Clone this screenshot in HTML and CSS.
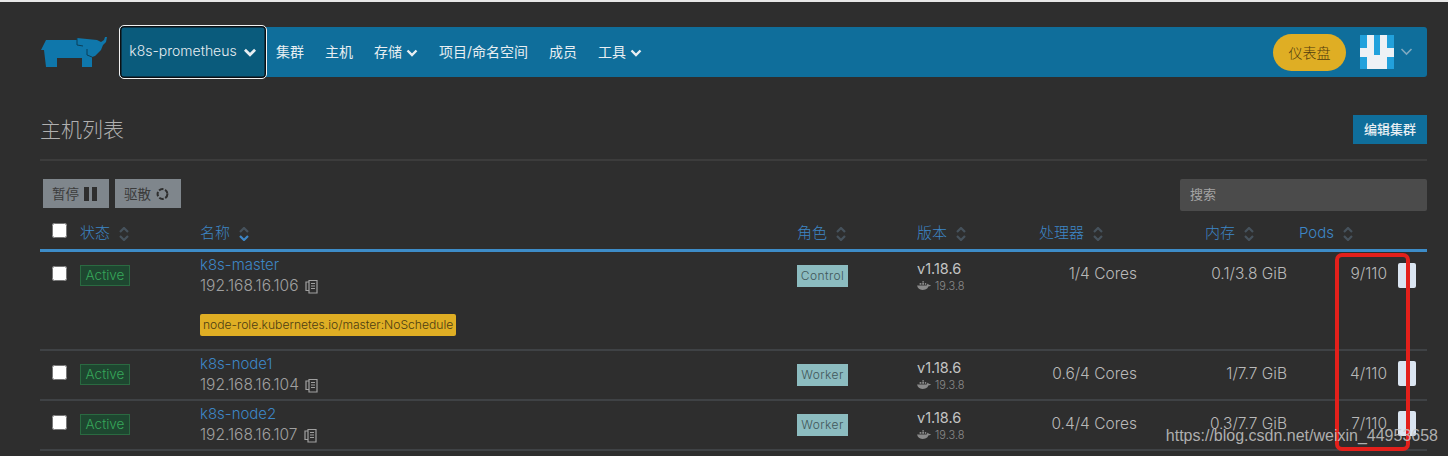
FILE: index.html
```html
<!DOCTYPE html>
<html lang="zh">
<head>
<meta charset="utf-8">
<title>主机列表</title>
<link rel="stylesheet" href="styles.css">
</head>
<body>
<div class="page">
  <header class="nav">
    <div class="brand">
      <svg class="logo" viewBox="0 0 67 31" aria-hidden="true"><path d="M0 13L5 3H36V1L56 3L60 5L63 3L64 0H66L65 5L62 8L60 13L54 19L51 20V30H41V21H16V30H5L3 13Z" fill="#0f77ab"/><path d="M36 1V8L42 9M46 12V18L51 20" stroke="#0b3f58" stroke-width="1" fill="none"/></svg>
    </div>
    <div class="bar">
      <button class="cluster">k8s-prometheus <svg class="chev big" viewBox="0 0 12 8"><path d="M1.5 1.5L6 6L10.5 1.5"/></svg></button>
      <nav class="menu">
        <a>集群</a>
        <a>主机</a>
        <a>存储 <svg class="chev" viewBox="0 0 12 8"><path d="M1.5 1.5L6 6L10.5 1.5"/></svg></a>
        <a>项目/命名空间</a>
        <a>成员</a>
        <a>工具 <svg class="chev" viewBox="0 0 12 8"><path d="M1.5 1.5L6 6L10.5 1.5"/></svg></a>
      </nav>
      <a class="dash">仪表盘</a>
      <svg class="avatar" viewBox="0 0 34 34" aria-hidden="true"><rect width="34" height="34" fill="#eef1f5"/><path d="M0 0H7V13H0ZM27 0H34V13H27ZM14 0H20V20H14ZM0 22H7V34H0ZM27 22H34V34H27Z" fill="#22a1dc"/></svg>
      <svg class="chev muted" viewBox="0 0 12 8"><path d="M1 1L6 6L11 1"/></svg>
    </div>
  </header>

  <div class="title-row">
    <h1>主机列表</h1>
    <button class="edit">编辑集群</button>
  </div>

  <div class="tools">
    <button class="act">暂停 <svg class="ic" viewBox="0 0 13 14"><path d="M0 0H5V14H0ZM8 0H13V14H8Z"/></svg></button>
    <button class="act">驱散 <svg class="ic" viewBox="0 0 14 14"><circle cx="7" cy="7" r="5.3" fill="none" stroke="#2e2e2e" stroke-width="2.2" stroke-dasharray="5 1.8"/></svg></button>
    <input class="search" placeholder="搜索">
  </div>

  <div class="grid head">
    <div class="c-check"><input type="checkbox" class="box"></div>
    <div><a class="th">状态 <svg class="sort" viewBox="0 0 10 14"><path d="M1 5L5 1L9 5M1 9L5 13L9 9"/></svg></a></div>
    <div><a class="th">名称 <svg class="sort down" viewBox="0 0 10 14"><path d="M1 5L5 1L9 5"/><path class="on" d="M1 9L5 13L9 9"/></svg></a></div>
    <div><a class="th">角色 <svg class="sort" viewBox="0 0 10 14"><path d="M1 5L5 1L9 5M1 9L5 13L9 9"/></svg></a></div>
    <div><a class="th">版本 <svg class="sort" viewBox="0 0 10 14"><path d="M1 5L5 1L9 5M1 9L5 13L9 9"/></svg></a></div>
    <div class="h-cpu"><a class="th">处理器 <svg class="sort" viewBox="0 0 10 14"><path d="M1 5L5 1L9 5M1 9L5 13L9 9"/></svg></a></div>
    <div class="h-mem"><a class="th">内存 <svg class="sort" viewBox="0 0 10 14"><path d="M1 5L5 1L9 5M1 9L5 13L9 9"/></svg></a></div>
    <div class="h-pods"><a class="th">Pods <svg class="sort" viewBox="0 0 10 14"><path d="M1 5L5 1L9 5M1 9L5 13L9 9"/></svg></a></div>
  </div>

  <div class="grid row row-tall">
    <div class="c-check"><input type="checkbox" class="box"></div>
    <div><span class="state">Active</span></div>
    <div class="name">
      <a>k8s-master</a>
      <p>192.168.16.106 <svg class="copy" viewBox="0 0 14 16"><path d="M4.500 2.500H12.500V15H4.500ZM4.500 4H1.500V12.500H4.500M6.500 5.500H10.500M6.500 8H10.500M6.500 10.500H10.500"/></svg></p>
      <span class="taint">node-role.kubernetes.io/master:NoSchedule</span>
    </div>
    <div><span class="role">Control</span></div>
    <div class="ver">v1.18.6<small><svg class="whale" viewBox="0 0 16 10"><path d="M0 5H11C11.500 3.500 12 3 12.500 3C13 4 13.500 4.500 16 4.500C15 6 14 6 13 6C12 9 9 10 6 10C3 10 1 8.500 0 5ZM3 2H5V4H3ZM6 2H8V4H6ZM6 0H8V1.500H6ZM9 2H10.500V4H9Z"/></svg>19.3.8</small></div>
    <div class="num">1/4 Cores</div>
    <div class="num">0.1/3.8 GiB</div>
    <div class="num">9/110</div>
    <div class="c-menu"><span class="more"></span></div>
  </div>

  <div class="grid row">
    <div class="c-check"><input type="checkbox" class="box"></div>
    <div><span class="state">Active</span></div>
    <div class="name">
      <a>k8s-node1</a>
      <p>192.168.16.104 <svg class="copy" viewBox="0 0 14 16"><path d="M4.500 2.500H12.500V15H4.500ZM4.500 4H1.500V12.500H4.500M6.500 5.500H10.500M6.500 8H10.500M6.500 10.500H10.500"/></svg></p>
    </div>
    <div><span class="role">Worker</span></div>
    <div class="ver">v1.18.6<small><svg class="whale" viewBox="0 0 16 10"><path d="M0 5H11C11.500 3.500 12 3 12.500 3C13 4 13.500 4.500 16 4.500C15 6 14 6 13 6C12 9 9 10 6 10C3 10 1 8.500 0 5ZM3 2H5V4H3ZM6 2H8V4H6ZM6 0H8V1.500H6ZM9 2H10.500V4H9Z"/></svg>19.3.8</small></div>
    <div class="num">0.6/4 Cores</div>
    <div class="num">1/7.7 GiB</div>
    <div class="num">4/110</div>
    <div class="c-menu"><span class="more"></span></div>
  </div>

  <div class="grid row">
    <div class="c-check"><input type="checkbox" class="box"></div>
    <div><span class="state">Active</span></div>
    <div class="name">
      <a>k8s-node2</a>
      <p>192.168.16.107 <svg class="copy" viewBox="0 0 14 16"><path d="M4.500 2.500H12.500V15H4.500ZM4.500 4H1.500V12.500H4.500M6.500 5.500H10.500M6.500 8H10.500M6.500 10.500H10.500"/></svg></p>
    </div>
    <div><span class="role">Worker</span></div>
    <div class="ver">v1.18.6<small><svg class="whale" viewBox="0 0 16 10"><path d="M0 5H11C11.500 3.500 12 3 12.500 3C13 4 13.500 4.500 16 4.500C15 6 14 6 13 6C12 9 9 10 6 10C3 10 1 8.500 0 5ZM3 2H5V4H3ZM6 2H8V4H6ZM6 0H8V1.500H6ZM9 2H10.500V4H9Z"/></svg>19.3.8</small></div>
    <div class="num">0.4/4 Cores</div>
    <div class="num">0.3/7.7 GiB</div>
    <div class="num">7/110</div>
    <div class="c-menu"><span class="more"></span></div>
  </div>

  <div class="highlight"></div>
  <div class="watermark">https://blog.csdn.net/weixin_44953658</div>
</div>
</body>
</html>
```
FILE: styles.css
```css
* { box-sizing: border-box; }
html, body { margin: 0; height: 456px; overflow: hidden; }
body {
  background: #2e2e2e;
  border-top: 2px solid #e8e8e8;
  color: #b9b9b9;
  font-family: Inter, "Noto Sans CJK SC", sans-serif;
  font-weight: 300;
  font-size: 14.500px;
}
.page { position: relative; height: 454px; padding: 25px 21px 0 40px; }
button { font-family: inherit; border: 0; cursor: pointer; }

.nav { height: 50px; display: flex; color: #e8eef2; }
.brand { width: 79px; display: flex; padding: 10px 0 0 1px; flex: none; }
.logo { width: 67px; height: 31px; }
.bar {
  flex: 1;
  display: flex;
  align-items: center;
  background: #0f6e9b;
  border-radius: 3px;
}
.cluster {
  width: 146px;
  height: 52px;
  margin: 0 10px 0 1px;
  padding: 0 0 3px;
  background: #0a5b7c;
  color: #e8eef2;
  font-size: 14px;
  font-weight: 300;
  border-radius: 4px;
  box-shadow: inset 0 0 0 1.500px #0c0f12;
  outline: 1px solid #f2f2f2;
  flex: none;
}
.chev { width: 12px; height: 8px; fill: none; stroke: #e8eef2; stroke-width: 2.400; vertical-align: 0; }
.chev.big { width: 14px; height: 9px; margin-left: 2px; vertical-align: -1px; }
.chev.muted { width: 13px; height: 8px; stroke: #7fa9c0; stroke-width: 1.600; margin: 0 14px 0 6px; }
.menu { display: flex; gap: 21px; font-size: 14px; flex: 1; padding-bottom: 3px; font-weight: 400; }
.dash {
  width: 73px;
  height: 37px;
  border-radius: 19px;
  background: #dfae24;
  color: #4f3c0e;
  font-size: 14px;
  display: flex;
  align-items: center;
  justify-content: center;
  margin: 0 14px 0 0;
}
.avatar { width: 34px; height: 34px; margin-top: -1px; }

.title-row {
  height: 84px;
  display: flex;
  justify-content: space-between;
  align-items: flex-start;
  padding-top: 38px;
  border-bottom: 2px solid #3c3c3c;
}
h1 { margin: 0; font-size: 21px; font-weight: 300; line-height: 30px; color: #b0b0b0; }
.edit {
  width: 74px;
  height: 29px;
  margin-top: 0;
  background: #0f6e9b;
  color: #e8eef2;
  font-size: 13px;
  font-weight: 500;
  padding: 0 0 2px;
}

.tools { display: flex; gap: 6px; padding: 18px 0 0 3px; height: 50px; }
.act {
  width: 66px;
  height: 29px;
  background: #7f868c;
  color: #3b3b3b;
  font-size: 13.500px;
  padding: 0 3px 2px 0;
  display: flex;
  align-items: center;
  justify-content: center;
  gap: 5px;
}
.ic { width: 13px; height: 14px; fill: #2e2e2e; margin-top: 2px; }
.search {
  margin-left: auto;
  width: 247px;
  height: 32px;
  background: #4b4b4b;
  border: 0;
  border-radius: 2px;
  padding: 0 10px 3px;
  font-family: inherit;
  font-size: 13px;
  color: #ccc;
}
.search::placeholder { color: #a4a4a4; }

.grid {
  display: grid;
  grid-template-columns: 40px 120px 597px 120px 100px 120px 150px 100px 40px;
}
.head { height: 41px; border-bottom: 3px solid #3d8cc8; padding-top: 11px; line-height: 22px; }
.th { color: #3d86c6; font-size: 15px; }
.sort { width: 10px; height: 14px; fill: none; stroke: #46525c; stroke-width: 2.200; margin-left: 5px; vertical-align: -3px; }
.sort .on { stroke: #3d86c6; }
.h-cpu { padding-left: 22px; }
.h-mem { padding-left: 68px; }
.h-pods { padding-left: 12px; }
.c-check { padding-left: 12px; }
.box { width: 15px; height: 15px; margin: 0; display: block; accent-color: #fff; }
.head .box { margin-top: 1px; }

.row { height: 50px; border-bottom: 2px solid #3f4245; padding-top: 10px; }
.row-tall { height: 99px; padding-top: 4px; }
.row .box { margin-top: 4px; }
.row-tall .box { margin-top: 10px; }
.state {
  display: inline-block;
  width: 50px;
  height: 21px;
  margin-top: 3px;
  background: #1e4730;
  border: 1px solid #2a6a41;
  color: #37a65a;
  font-size: 13.500px;
  line-height: 19px;
  text-align: center;
}
.row-tall .state { margin-top: 9px; }
.name { margin-top: -8px; line-height: 21px; }
.row-tall .name { margin-top: -2px; }
.name a { color: #3d86c6; font-size: 15px; display: block; }
.name p { margin: 0; color: #a0a0a0; font-size: 15.500px; }
.copy { width: 15px; height: 16px; margin-left: 1px; fill: none; stroke: #a0a0a0; stroke-width: 1.200; vertical-align: -3px; }
.taint {
  display: inline-block;
  margin-top: 18px;
  padding: 0 3px;
  height: 22px;
  line-height: 22px;
  background: #dfae24;
  color: #4b3c12;
  font-size: 12.100px;
  border-radius: 2px;
  white-space: nowrap;
}
.role {
  display: inline-block;
  width: 51px;
  height: 22px;
  margin-top: 3px;
  background: #8cbcc0;
  color: #3f5659;
  font-size: 12px;
  line-height: 22px;
  text-align: center;
  letter-spacing: .4px;
}
.row-tall .role { margin-top: 9px; }
.ver { color: #c4c4c4; font-size: 14.500px; font-weight: 400; line-height: 20px; margin-top: -3px; }
.row-tall .ver { margin-top: 3px; }
.ver small { display: block; color: #8a8a8a; font-size: 11px; font-weight: 300; line-height: 14px; }
.whale { width: 14px; height: 9px; fill: #8a8a8a; margin-right: 4px; }
.num { text-align: right; color: #b9b9b9; font-size: 15.500px; line-height: 20px; margin-top: 3px; }
.row-tall .num { margin-top: 8px; }
.c-menu { padding-left: 11px; }
.more { display: block; width: 18px; height: 25px; margin-top: 0; background: #dbe5f1; border-radius: 2px; }
.row-tall .more { margin-top: 7px; }

.highlight {
  position: absolute;
  left: 1335px;
  top: 251px;
  width: 75px;
  height: 198px;
  border: 4px solid #e3201b;
  border-radius: 7px;
}
.watermark {
  position: absolute;
  right: 10px;
  top: 425px;
  font-family: "Liberation Sans", sans-serif;
  font-size: 16px;
  font-weight: 400;
  line-height: 18px;
  color: rgba(200, 200, 200, .85);
  white-space: nowrap;
}
```
